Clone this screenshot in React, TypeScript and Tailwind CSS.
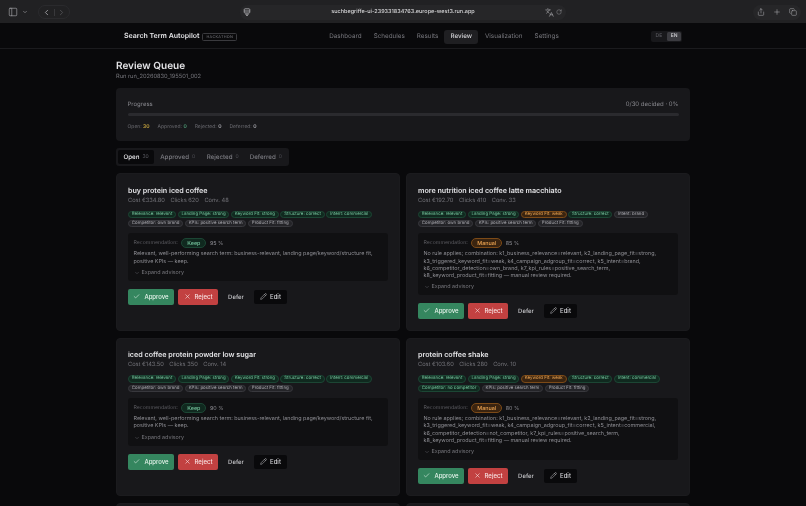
import { Check, ChevronDown, ChevronLeft, ChevronRight, Copy, Languages, PanelLeft, Pencil, Plus, RotateCw, Share, X } from 'lucide-react';

type Chip = { label: string; tone: 'green' | 'orange' | 'gray' };

type Term = {
  title: string;
  cost: string;
  clicks: number;
  conv: number;
  rec: 'Keep' | 'Manual';
  pct: number;
  text: string[];
  chips: Chip[];
};

const g = (label: string): Chip => ({ label, tone: 'green' });
const o = (label: string): Chip => ({ label, tone: 'orange' });
const n = (label: string): Chip => ({ label, tone: 'gray' });

const keepText = [
  'Relevant, well-performing search term: business-relevant, landing page/keyword/structure fit,',
  'positive KPIs — keep.',
];

const terms: Term[] = [
  {
    title: 'buy protein iced coffee',
    cost: '€334.80',
    clicks: 620,
    conv: 48,
    rec: 'Keep',
    pct: 95,
    text: keepText,
    chips: [
      g('Relevance: relevant'), g('Landing Page: strong'), g('Keyword Fit: strong'), g('Structure: correct'), g('Intent: commercial'),
      n('Competitor: own brand'), n('KPIs: positive search term'), n('Product Fit: fitting'),
    ],
  },
  {
    title: 'more nutrition iced coffee latte macchiato',
    cost: '€192.70',
    clicks: 410,
    conv: 33,
    rec: 'Manual',
    pct: 85,
    text: [
      'No rule applies; combination: k1_business_relevance=relevant, k2_landing_page_fit=strong,',
      'k3_triggered_keyword_fit=weak, k4_campaign_adgroup_fit=correct, k5_intent=brand,',
      'k6_competitor_detection=own_brand, k7_kpi_rules=positive_search_term,',
      'k8_keyword_product_fit=fitting — manual review required.',
    ],
    chips: [
      g('Relevance: relevant'), g('Landing Page: strong'), o('Keyword Fit: weak'), g('Structure: correct'), n('Intent: brand'),
      n('Competitor: own brand'), n('KPIs: positive search term'), n('Product Fit: fitting'),
    ],
  },
  {
    title: 'iced coffee protein powder low sugar',
    cost: '€143.50',
    clicks: 350,
    conv: 14,
    rec: 'Keep',
    pct: 90,
    text: keepText,
    chips: [
      g('Relevance: relevant'), g('Landing Page: strong'), g('Keyword Fit: strong'), g('Structure: correct'), g('Intent: commercial'),
      n('Competitor: own brand'), n('KPIs: positive search term'), n('Product Fit: fitting'),
    ],
  },
  {
    title: 'protein coffee shake',
    cost: '€103.60',
    clicks: 280,
    conv: 10,
    rec: 'Manual',
    pct: 80,
    text: [
      'No rule applies; combination: k1_business_relevance=relevant, k2_landing_page_fit=strong,',
      'k3_triggered_keyword_fit=weak, k4_campaign_adgroup_fit=correct, k5_intent=commercial,',
      'k6_competitor_detection=not_competitor, k7_kpi_rules=positive_search_term,',
      'k8_keyword_product_fit=fitting — manual review required.',
    ],
    chips: [
      g('Relevance: relevant'), g('Landing Page: strong'), o('Keyword Fit: weak'), g('Structure: correct'), g('Intent: commercial'),
      g('Competitor: no competitor'), n('KPIs: positive search term'), n('Product Fit: fitting'),
    ],
  },
];

const chipTone = {
  green: 'bg-[#10291f] border-[#1c4634] text-[#74c29c]',
  orange: 'bg-[#3a2410] border-[#7c4a17] text-[#eda552]',
  gray: 'bg-[#242428] border-[#38383d] text-[#a8a8ae]',
};

const TermCard = ({ term }: { term: Term }) => (
  <div className="rounded-[4px] bg-[#18181b] border border-[#1b1b1e] px-[11px] pt-[10.5px] pb-[11px]">
    <h3 className="text-[7.15px] leading-[11px] font-semibold text-[#e4e4e7]">{term.title}</h3>
    <div className="flex gap-[5.5px] text-[5.7px] leading-[8px] mt-[1px] text-[#737379]">
      <span>Cost {term.cost}</span>
      <span>Clicks {term.clicks}</span>
      <span>Conv. {term.conv}</span>
    </div>
    <div className="flex flex-wrap gap-x-[1.6px] gap-y-[1.8px] mt-[6px]">
      {term.chips.map((chip) => (
        <span key={chip.label} className={`h-[7.6px] flex items-center rounded-full border-[0.5px] px-[2.8px] pt-[1px] text-[4.4px] leading-none whitespace-nowrap ${chipTone[chip.tone]}`}>
          {chip.label}
        </span>
      ))}
    </div>
    <div className="mt-[6px] rounded-[3px] bg-[#101012] px-[5.5px] pt-[5px] pb-[4px]">
      <div className="flex items-center gap-[3.5px] h-[10px] text-[5.2px]">
        <span className="pt-[1px] text-[#5c5c62]">Recommendation:</span>
        <span
          className={
            term.rec === 'Keep'
              ? 'h-[10px] flex items-center rounded-full border-[0.5px] px-[5px] pt-[0.5px] text-[5.4px] font-medium bg-[#10291f] border-[#1c4634] text-[#74c29c]'
              : 'h-[10px] flex items-center rounded-full border-[0.5px] px-[5px] pt-[0.5px] text-[5.4px] font-medium bg-[#3a2410] border-[#7c4a17] text-[#eda552]'
          }
        >
          {term.rec}
        </span>
        <span className="pt-[1px] text-[5.4px] text-[#8a8a90]">{term.pct} %</span>
      </div>
      <div className="mt-[3px] text-[5.4px] leading-[7.1px] text-[#8e8e94] whitespace-nowrap">
        {term.text.map((line) => (
          <div key={line}>{line}</div>
        ))}
      </div>
      <div className="flex items-center gap-[2px] mt-[3px] text-[5.4px] leading-[8px] text-[#77777d]">
        <ChevronDown size={6} strokeWidth={1.5} />
        Expand advisory
      </div>
    </div>
    <div className="flex items-center mt-[8px] text-[6px] font-medium">
      <button className="h-[16px] w-[46px] flex items-center justify-center gap-[4px] rounded-[2px] bg-[#35865f] text-[#e4f3ea]">
        <Check size={7} strokeWidth={2} />
        Approve
      </button>
      <button className="h-[16px] w-[40px] ml-[4px] flex items-center justify-center gap-[4px] rounded-[2px] bg-[#c24141] text-[#f8e3e3]">
        <X size={7} strokeWidth={2} />
        Reject
      </button>
      <span className="w-[34px] ml-[1px] pt-[1px] text-center text-[#c8c8cc]">Defer</span>
      <button className="h-[14px] w-[33px] ml-[1px] flex items-center justify-center gap-[3px] rounded-[2px] bg-[#09090b] text-[#d4d4d8]">
        <Pencil size={7} strokeWidth={1.6} />
        Edit
      </button>
    </div>
  </div>
);

export default function App() {
  return (
    <div className="h-[506px] w-[806px] overflow-hidden bg-[#09090b] blur-[0.35px] [text-rendering:geometricPrecision]" style={{ fontFamily: 'Inter, "Liberation Sans", sans-serif' }}>
      {/* Browser chrome */}
      <div className="h-[23px] flex items-center bg-[#212123] pl-[8px] pr-[5px] pt-[1px] text-[#b4b4b8]">
        <div className="flex items-center gap-[4px] h-[14px] w-[26px]">
          <PanelLeft size={10} strokeWidth={1.4} />
          <ChevronDown size={6} strokeWidth={2} />
        </div>
        <div className="flex items-center justify-between ml-[4px] w-[32px] h-[14px] rounded-full border border-[#2a2a2d] px-[3px]">
          <ChevronLeft size={9} strokeWidth={2} />
          <span className="w-px h-[7px] bg-[#38383b]" />
          <ChevronRight size={9} strokeWidth={2} className="text-[#58585c]" />
        </div>
        <div className="flex items-center ml-[170px] w-[326px] h-[15px] rounded-full bg-[#262628] px-[3px]">
          <div className="w-[21px]">
            <svg width="8" height="8" viewBox="0 0 8 8" fill="none" stroke="currentColor" strokeWidth="0.8">
              <rect x="1.2" y="0.8" width="5.6" height="4.2" rx="0.8" />
              <path d="M1.2 3h5.6M2.2 6.2h3.6M3 7.4h2" />
            </svg>
          </div>
          <span className="flex-1 pt-[1px] text-center text-[5.5px] font-medium text-[#d6d6d8]">suchbegriffe-ui-239331834763.europe-west3.run.app</span>
          <div className="w-[21px] flex items-center justify-end gap-[2px] pr-[1px]">
            <Languages size={9} strokeWidth={1.5} />
            <RotateCw size={6} strokeWidth={1.5} />
          </div>
        </div>
        <div className="flex items-center gap-[8px] ml-auto h-[15px] rounded-full bg-[#262628] px-[4px]">
          <Share size={8} strokeWidth={1.5} />
          <Plus size={8} strokeWidth={1.5} />
          <Copy size={8} strokeWidth={1.5} />
        </div>
      </div>

      {/* Top nav */}
      <div className="h-[26px] flex items-center border-b border-[#1b1b1e] bg-[#09090b] pl-[124px] pr-[124px] pt-[2px]">
        <span className="text-[7px] font-semibold text-[#e4e4e7]">Search Term Autopilot</span>
        <span className="ml-[3px] h-[8px] flex items-center rounded-[1.5px] border-[0.5px] border-[#3a3a3e] px-[3px] text-[3.8px] tracking-[0.3px] text-[#78787e]">HACKATHON</span>
        <nav className="flex items-center ml-[86px] text-[6.3px] text-[#77777d]">
          <span className="px-[6px]">Dashboard</span>
          <span className="px-[6px]">Schedules</span>
          <span className="px-[6px]">Results</span>
          <span className="px-[6px] h-[14px] flex items-center rounded-[3px] bg-[#1f1f22] font-medium text-[#d4d4d8]">Review</span>
          <span className="pl-[7px] pr-[6px]">Visualization</span>
          <span className="px-[6px]">Settings</span>
        </nav>
        <div className="ml-auto flex items-center gap-[1px] h-[11px] rounded-[2px] bg-[#18181b] p-[1px] text-[5px] font-medium">
          <span className="px-[4px] text-[#5c5c62]">DE</span>
          <span className="px-[3.5px] h-full flex items-center rounded-[1.5px] bg-[#3b3b40] text-[#d4d4d8]">EN</span>
        </div>
      </div>

      {/* Main */}
      <div className="w-[574px] ml-[116px]">
        <h1 className="mt-[11px] text-[10px] leading-[13px] font-semibold text-[#e4e4e7]">Review Queue</h1>
        <p className="text-[5.7px] leading-[8px] text-[#77777d]">Run run_20260830_195501_002</p>

        <div className="mt-[7px] h-[53px] rounded-[4px] bg-[#18181b] px-[11.5px] pt-[13px]">
          <div className="flex justify-between text-[6px] leading-[8px] text-[#85858b]">
            <span>Progress</span>
            <span>0/30 decided · 0%</span>
          </div>
          <div className="mt-[4px] h-[3px] rounded-full bg-[#2a2a2e]" />
          <div className="flex gap-[8px] mt-[7px] text-[5px] leading-[8px] text-[#6a6a70]">
            <span>Open: <b className="font-semibold text-[#c9a63e]">30</b></span>
            <span>Approved: <b className="font-semibold text-[#4f9e78]">0</b></span>
            <span>Rejected: <b className="font-semibold text-[#a8a8ae]">0</b></span>
            <span>Deferred: <b className="font-semibold text-[#a8a8ae]">0</b></span>
          </div>
        </div>

        <div className="mt-[7px] flex w-fit items-center h-[18px] rounded-[3px] bg-[#18181b] p-[2px] text-[6.2px] font-medium text-[#7c7c82]">
          <span className="h-full flex items-center gap-[3px] rounded-[2px] bg-[#09090b] px-[5.5px] pt-[1px] text-[#e4e4e7]">
            Open <span className="text-[5px] font-normal text-[#5c5c62]">30</span>
          </span>
          <span className="flex items-center gap-[3px] px-[6px] pt-[1px]">Approved <span className="text-[5px] font-normal text-[#4a4a50]">0</span></span>
          <span className="flex items-center gap-[3px] px-[5.5px] pt-[1px]">Rejected <span className="text-[5px] font-normal text-[#4a4a50]">0</span></span>
          <span className="flex items-center gap-[3px] px-[5.5px] pt-[1px]">Deferred <span className="text-[5px] font-normal text-[#4a4a50]">0</span></span>
        </div>

        <div className="grid grid-cols-2 gap-x-[6px] gap-y-[7px] mt-[7px]">
          {terms.map((term) => (
            <TermCard key={term.title} term={term} />
          ))}
          <TermCard term={terms[0]} />
          <TermCard term={terms[1]} />
        </div>
      </div>
    </div>
  );
}
